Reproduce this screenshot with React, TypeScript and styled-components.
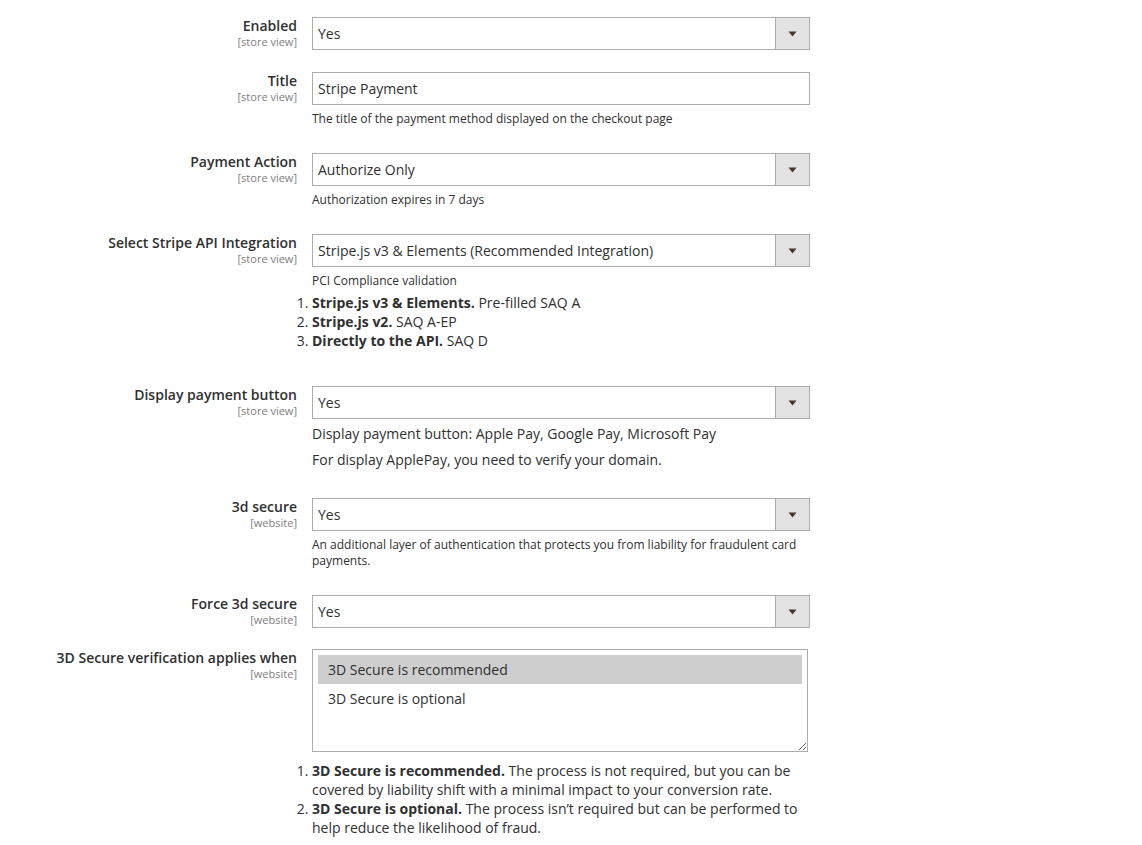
import React from 'react';
import styled, { createGlobalStyle } from 'styled-components';

const Global = createGlobalStyle`
  html, body { margin: 0; padding: 0; background: #ffffff; }
  body { font-family: "Open Sans", "Liberation Sans", sans-serif; color: #303030; }
`;

const Page = styled.div`
  padding-top: 17px;
  padding-bottom: 8px;
`;

const Row = styled.div<{ $mb?: number }>`
  display: grid;
  grid-template-columns: 297px 498px;
  column-gap: 15px;
  margin-bottom: ${(p) => (p.$mb ?? 22)}px;
`;

const LabelCol = styled.div`
  text-align: right;
`;

const Label = styled.div`
  font-size: 14px;
  font-weight: 600;
  line-height: 18px;
  color: #303030;
`;

const Scope = styled.div`
  font-size: 11px;
  line-height: 14px;
  color: #808080;
`;

const Control = styled.div`
  display: flex;
  flex-direction: column;
`;

const SelectBox = styled.div`
  box-sizing: border-box;
  height: 33px;
  border: 1px solid #adadad;
  display: flex;
  align-items: stretch;
  background: #fff;
`;

const SelectValue = styled.div`
  flex: 1;
  display: flex;
  align-items: center;
  padding-left: 5px;
  font-size: 14px;
  color: #303030;
`;

const ArrowButton = styled.div`
  width: 33px;
  background: #e3e3e3;
  border-left: 1px solid #adadad;
  display: flex;
  align-items: center;
  justify-content: center;
`;

const Input = styled.div`
  box-sizing: border-box;
  height: 33px;
  border: 1px solid #adadad;
  display: flex;
  align-items: center;
  padding-left: 5px;
  font-size: 14px;
  color: #303030;
`;

const Note = styled.div`
  font-size: 12px;
  line-height: 16px;
  margin: 6px 0 4px;
  color: #303030;
`;

const BigNote = styled.div<{ $mt: number }>`
  font-size: 14px;
  line-height: 20px;
  margin-top: ${(p) => p.$mt}px;
  color: #303030;
`;

const List = styled.ol<{ $mt?: number }>`
  margin: ${(p) => p.$mt ?? 0}px 0 0;
  padding: 0;
  list-style: decimal outside;
  font-size: 14px;
  line-height: 19px;
  color: #303030;
`;

const Item = styled.li``;

const Strong = styled.b`
  font-weight: 700;
`;

const Multi = styled.div`
  box-sizing: border-box;
  width: 496px;
  height: 103px;
  border: 1px solid #adadad;
  padding: 5px;
  overflow: auto;
  resize: vertical;
`;

const Option = styled.div<{ $selected?: boolean }>`
  height: 29px;
  line-height: 29px;
  padding: 0 10px;
  font-size: 14px;
  color: #303030;
  background: ${(p) => (p.$selected ? '#cecece' : 'transparent')};
`;

const Arrow = () => (
  <svg width="9" height="6" viewBox="0 0 9 6">
    <path d="M0.5 0.5 H8.5 L4.5 5.5 Z" fill="#41362f" />
  </svg>
);

const Select = ({ value }: { value: string }) => (
  <SelectBox>
    <SelectValue>{value}</SelectValue>
    <ArrowButton>
      <Arrow />
    </ArrowButton>
  </SelectBox>
);

const FieldLabel = ({ label, scope }: { label: string; scope: string }) => (
  <LabelCol>
    <Label>{label}</Label>
    <Scope>{scope}</Scope>
  </LabelCol>
);

export default function App() {
  return (
    <Page>
      <Global />
      <Row>
        <FieldLabel label="Enabled" scope="[store view]" />
        <Control>
          <Select value="Yes" />
        </Control>
      </Row>
      <Row>
        <FieldLabel label="Title" scope="[store view]" />
        <Control>
          <Input>Stripe Payment</Input>
          <Note>The title of the payment method displayed on the checkout page</Note>
        </Control>
      </Row>
      <Row>
        <FieldLabel label="Payment Action" scope="[store view]" />
        <Control>
          <Select value="Authorize Only" />
          <Note>Authorization expires in 7 days</Note>
        </Control>
      </Row>
      <Row $mb={36}>
        <FieldLabel label="Select Stripe API Integration" scope="[store view]" />
        <Control>
          <Select value="Stripe.js v3 & Elements (Recommended Integration)" />
          <Note>PCI Compliance validation</Note>
          <List>
            <Item>
              <Strong>Stripe.js v3 &amp; Elements.</Strong> Pre-filled SAQ A
            </Item>
            <Item>
              <Strong>Stripe.js v2.</Strong> SAQ A-EP
            </Item>
            <Item>
              <Strong>Directly to the API.</Strong> SAQ D
            </Item>
          </List>
        </Control>
      </Row>
      <Row $mb={28}>
        <FieldLabel label="Display payment button" scope="[store view]" />
        <Control>
          <Select value="Yes" />
          <BigNote $mt={5}>Display payment button: Apple Pay, Google Pay, Microsoft Pay</BigNote>
          <BigNote $mt={6}>For display ApplePay, you need to verify your domain.</BigNote>
        </Control>
      </Row>
      <Row>
        <FieldLabel label="3d secure" scope="[website]" />
        <Control>
          <Select value="Yes" />
          <Note>
            An additional layer of authentication that protects you from liability for fraudulent card
            payments.
          </Note>
        </Control>
      </Row>
      <Row $mb={21}>
        <FieldLabel label="Force 3d secure" scope="[website]" />
        <Control>
          <Select value="Yes" />
        </Control>
      </Row>
      <Row $mb={0}>
        <FieldLabel label="3D Secure verification applies when" scope="[website]" />
        <Control>
          <Multi>
            <Option $selected>3D Secure is recommended</Option>
            <Option>3D Secure is optional</Option>
          </Multi>
          <List $mt={9}>
            <Item>
              <Strong>3D Secure is recommended.</Strong> The process is not required, but you can be
              covered by liability shift with a minimal impact to your conversion rate.
            </Item>
            <Item>
              <Strong>3D Secure is optional.</Strong> The process isn’t required but can be performed to
              help reduce the likelihood of fraud.
            </Item>
          </List>
        </Control>
      </Row>
    </Page>
  );
}
